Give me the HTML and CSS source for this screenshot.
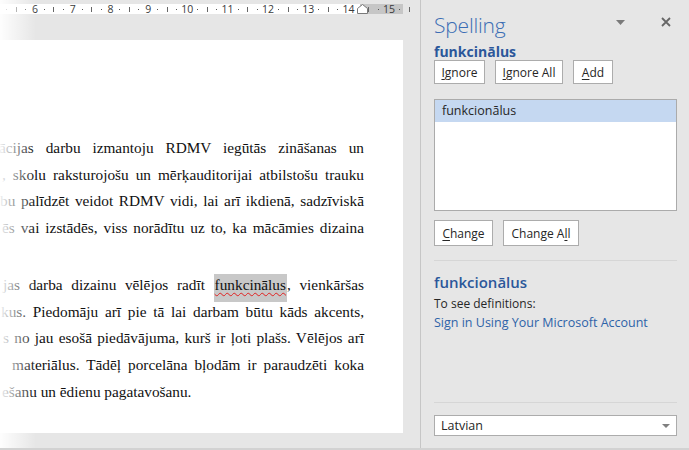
FILE: index.html
```html
<!DOCTYPE html>
<html lang="lv">
<head>
<meta charset="utf-8">
<title>Spelling</title>
<link rel="stylesheet" href="styles.css">
</head>
<body>
<div class="app">
  <div class="doc-area">
    <div class="ruler-row">
      <div class="ruler">
        <div class="ticks">
          <span class="n"></span><span class="d"></span><span class="l"></span><span class="d"></span>
          <span class="n">6</span><span class="d"></span><span class="l"></span><span class="d"></span>
          <span class="n">7</span><span class="d"></span><span class="l"></span><span class="d"></span>
          <span class="n">8</span><span class="d"></span><span class="l"></span><span class="d"></span>
          <span class="n">9</span><span class="d"></span><span class="l"></span><span class="d"></span>
          <span class="n">10</span><span class="d"></span><span class="l"></span><span class="d"></span>
          <span class="n">11</span><span class="d"></span><span class="l"></span><span class="d"></span>
          <span class="n">12</span><span class="d"></span><span class="l"></span><span class="d"></span>
          <span class="n">13</span><span class="d"></span><span class="l"></span><span class="d"></span>
          <span class="n">14</span><span class="d"></span><span class="l"></span><span class="d"></span>
          <span class="n">15</span><span class="d"></span><span class="l"></span>
        </div>
        <svg class="indent" width="11" height="10" viewBox="0 0 11 10"><path d="M0.5 4.5 L5.5 0.5 L10.5 4.5 L10.5 9.5 L0.5 9.5 Z" fill="#fff" stroke="#7a7a7a"/></svg>
      </div>
    </div>
    <div class="page">
      <p class="para">
        <span class="ln s1">ācijas darbu izmantoju RDMV iegūtās zināšanas un</span>
        <span class="ln s2">, skolu raksturojošu un mērķauditorijai atbilstošu trauku</span>
        <span class="ln s3">bu palīdzēt veidot RDMV vidi, lai arī ikdienā, sadzīviskā</span>
        <span class="ln s4">ēs vai izstādēs, viss norādītu uz to, ka mācāmies dizaina</span>
      </p>
      <p class="para p2">
        <span class="ln s5">jas darba dizainu vēlējos radīt <span class="err">funkcinālus</span>, vienkāršas</span>
        <span class="ln s6">kus. Piedomāju arī pie tā lai darbam būtu kāds akcents,</span>
        <span class="ln s7">s no jau esošā piedāvājuma, kurš ir ļoti plašs. Vēlējos arī</span>
        <span class="ln s8">materiālus. Tādēļ porcelāna bļodām ir paraudzēti koka</span>
        <span class="ln s9 last">ešanu un ēdienu pagatavošanu.</span>
      </p>
    </div>
    <div class="fade"></div>
  </div>
  <aside class="pane">
    <div class="pane-head">
      <h1 class="title">Spelling</h1>
      <svg class="menu-arrow" width="9" height="5" viewBox="0 0 9 5"><path d="M0 0 H9 L4.5 5 Z" fill="#7a7a7a"/></svg>
      <svg class="close" width="10" height="10" viewBox="0 0 10 10"><path d="M1 1 L9 9 M9 1 L1 9" stroke="#666" stroke-width="1.8"/></svg>
    </div>
    <div class="word">funkcinālus</div>
    <div class="btn-row">
      <button class="btn w-ignore"><u>I</u>gnore</button>
      <button class="btn w-ignore-all"><u>I</u>gnore All</button>
      <button class="btn w-add"><u>A</u>dd</button>
    </div>
    <div class="list">
      <div class="item selected">funkcionālus</div>
    </div>
    <div class="btn-row row2">
      <button class="btn w-change"><u>C</u>hange</button>
      <button class="btn w-change-all">Change A<u>l</u>l</button>
    </div>
    <div class="sep"></div>
    <div class="def-word">funkcionālus</div>
    <div class="def-text">To see definitions:</div>
    <div class="def-link">Sign in Using Your Microsoft Account</div>
    <div class="bottom">
      <div class="sep"></div>
      <div class="select">
        <span>Latvian</span>
        <svg width="8" height="4" viewBox="0 0 8 4"><path d="M0 0 H8 L4 4 Z" fill="#808080"/></svg>
      </div>
    </div>
  </aside>
</div>
</body>
</html>
```

FILE: styles.css
```css
* { box-sizing: border-box; }
html, body { margin: 0; padding: 0; }
body {
  width: 689px;
  height: 450px;
  overflow: hidden;
  background: #e6e6e6;
  font-family: "Open Sans", "Noto Sans", sans-serif;
}
.app {
  display: flex;
  width: 689px;
  height: 450px;
  border-bottom: 2px solid #d2d2d2;
}
.doc-area {
  position: relative;
  width: 420px;
  height: 448px;
  display: flex;
  flex-direction: column;
  overflow: hidden;
}
.ruler-row {
  padding-top: 4px;
  height: 14px;
}
.ruler {
  position: relative;
  width: 403px;
  height: 10px;
  background: linear-gradient(to right, #ffffff 0, #ffffff 360px, #c6c6c6 360px);
}
.ticks {
  display: flex;
  margin-left: -7.5px;
  height: 10px;
  align-items: center;
}
.ticks span {
  flex: 0 0 9.45px;
  display: flex;
  justify-content: center;
  align-items: center;
  height: 10px;
  font-size: 10.5px;
  line-height: 10px;
  color: #3a3a3a;
  font-family: "Open Sans", "Noto Sans", sans-serif;
  white-space: nowrap;
}
.ticks .d::before {
  content: "";
  width: 1px;
  height: 1px;
  background: #555;
}
.ticks .l::before {
  content: "";
  width: 1px;
  height: 5px;
  background: #666;
}
.indent {
  position: absolute;
  left: 357px;
  top: 0;
  display: block;
}
.page {
  margin-top: 26px;
  width: 403px;
  height: 393px;
  background: #fff;
  padding: 95px 39px 0 0;
  font-family: "Liberation Serif", "Times New Roman", serif;
  font-size: 15.3px;
  line-height: 26.7px;
  color: #111;
}
.para { margin: 0; }
.p2 { margin-top: 30px; }
.ln {
  display: block;
  text-align: justify;
  text-align-last: justify;
}
.ln.last { text-align-last: left; }
.s1 { margin-left: -1px; }
.s2 { margin-left: 2px; }
.s3 { margin-left: 0; }
.s4 { margin-left: 2px; }
.s5 { margin-left: 3px; }
.s6 { margin-left: 1px; }
.s7 { margin-left: 3px; }
.s8 { margin-left: 12px; }
.s9 { margin-left: 2px; }
.err {
  background: #c8c8c8;
  text-decoration: underline wavy #e02020;
  text-decoration-thickness: 1px;
  text-underline-offset: 2px;
  padding: 2px 1px 9px;
}
.fade {
  position: absolute;
  left: 0;
  top: 0;
  width: 36px;
  height: 448px;
  background: linear-gradient(to right, rgba(255,255,255,0.95), rgba(255,255,255,0));
  pointer-events: none;
}
.pane {
  width: 269px;
  height: 448px;
  border-left: 1px solid #c6c6c6;
  padding: 0 12px 0 13px;
  display: flex;
  flex-direction: column;
  color: #262626;
}
.pane-head {
  display: flex;
  align-items: center;
  height: 44px;
  padding-top: 6px;
}
.title {
  margin: 0;
  flex: 1;
  font-size: 21px;
  font-weight: 300;
  color: #3b6db4;
  letter-spacing: -0.2px;
}
.menu-arrow { margin-right: 36px; margin-top: -6px; }
.close { margin-right: 6px; margin-top: -6px; }
.word {
  font-size: 14px;
  font-weight: 700;
  color: #2b579a;
  line-height: 18px;
  margin-top: -1px;
}
.btn-row {
  display: flex;
  gap: 10px;
  margin-top: -1px;
}
.btn {
  height: 24px;
  padding: 0;
  background: #fff;
  border: 1px solid #acacac;
  font-family: "Open Sans", "Noto Sans", sans-serif;
  font-size: 12px;
  color: #262626;
  border-radius: 0;
  text-align: center;
}
.w-ignore { width: 51px; }
.w-ignore-all { width: 68px; }
.w-add { width: 40px; }
.w-change { width: 59px; }
.w-change-all { width: 76px; }
.btn u { text-underline-offset: 2px; }
.list {
  margin-top: 15px;
  height: 112px;
  background: #fff;
  border: 1px solid #ababab;
}
.item {
  height: 22px;
  line-height: 21px;
  padding-left: 7px;
  font-size: 12.5px;
}
.item.selected { background: #c5d8f1; }
.row2 { margin-top: 9px; }
.row2 .btn { height: 26px; }
.sep {
  height: 1px;
  background: #d6d6d6;
}
.pane > .sep { margin-top: 14px; }
.def-word {
  margin-top: 11px;
  font-size: 15px;
  font-weight: 600;
  color: #2b579a;
  line-height: 20px;
}
.def-text {
  margin-top: 3px;
  font-size: 12px;
  line-height: 18px;
}
.def-link {
  margin-top: 1px;
  font-size: 12.5px;
  line-height: 18px;
  color: #2e63a8;
}
.bottom {
  margin-top: auto;
  padding-bottom: 12px;
}
.select {
  margin-top: 12px;
  height: 21px;
  background: #fff;
  border: 1px solid #acacac;
  display: flex;
  align-items: center;
  justify-content: space-between;
  padding: 0 6px 0 6px;
  font-size: 12.5px;
}
```
